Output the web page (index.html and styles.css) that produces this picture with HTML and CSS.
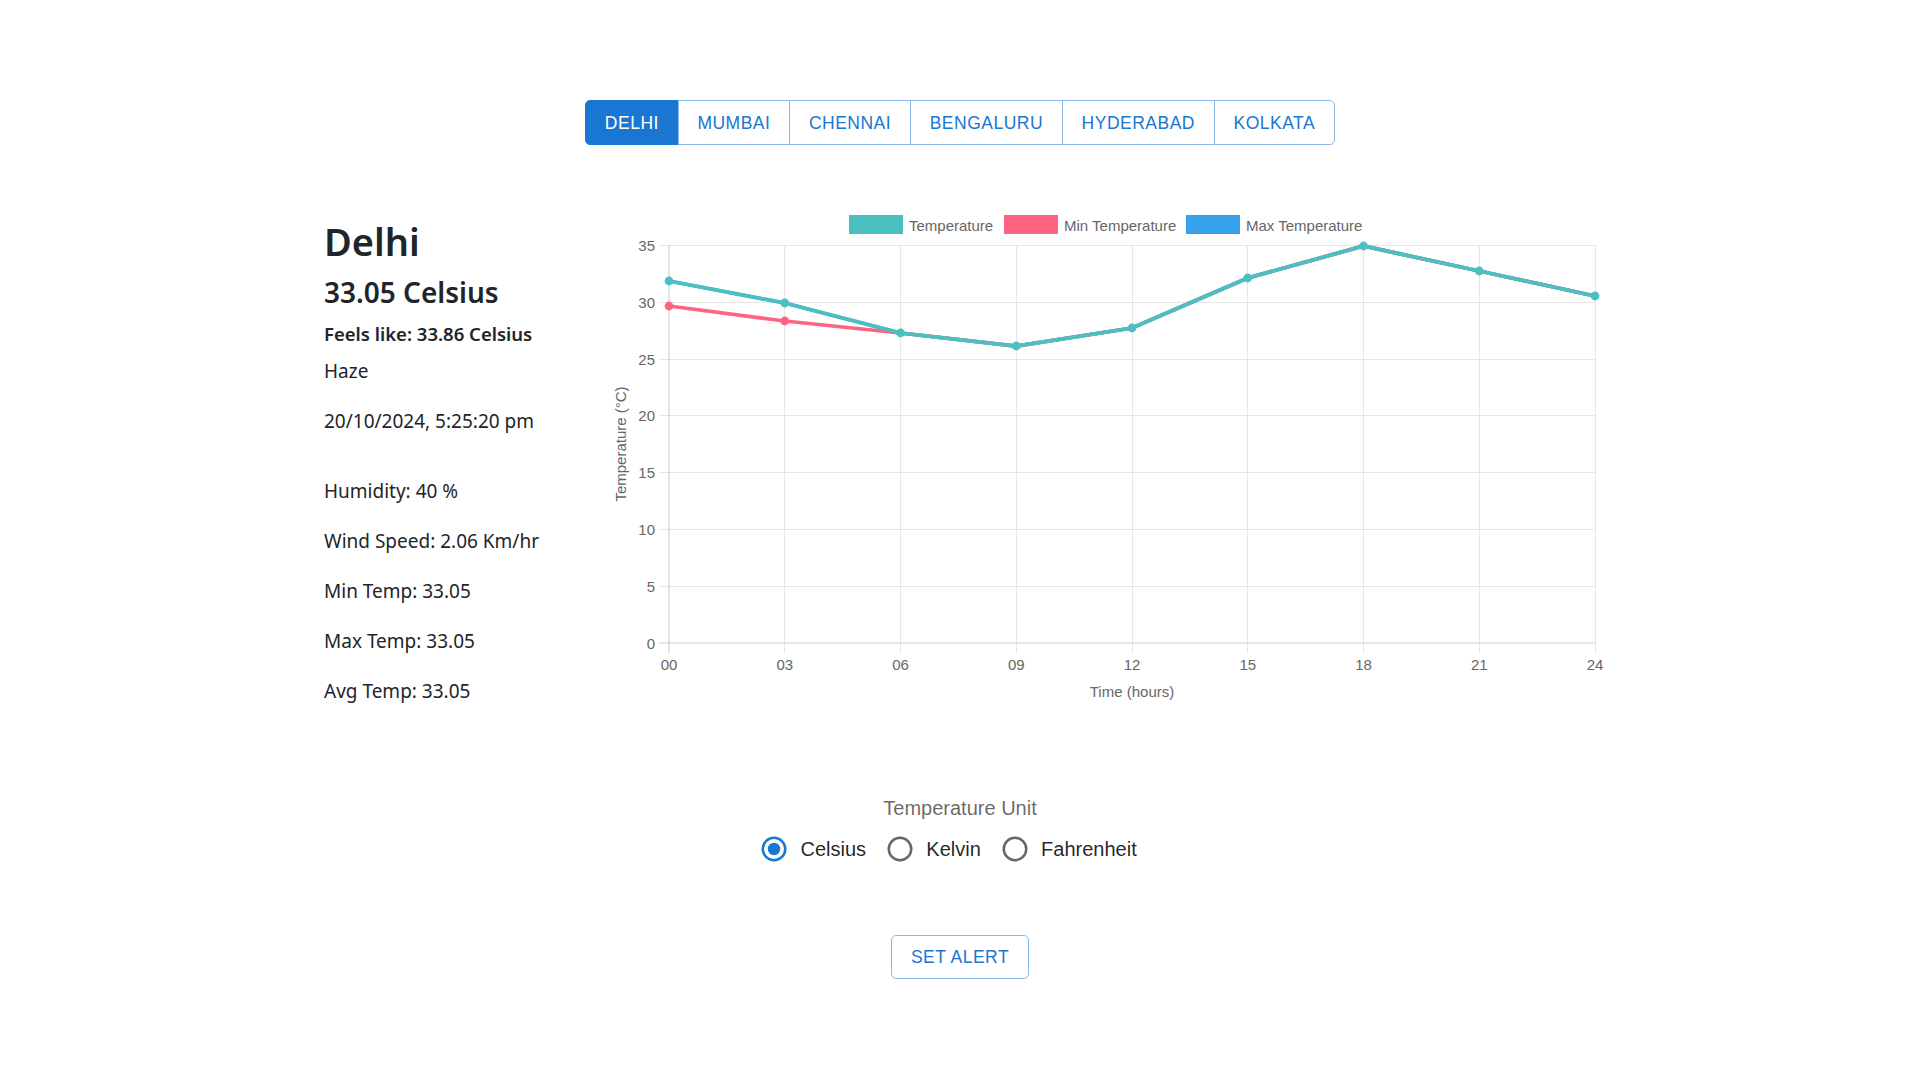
FILE: index.html
```html
<!DOCTYPE html>
<html lang="en">
<head>
<meta charset="utf-8">
<title>Weather Dashboard</title>
<link rel="stylesheet" href="styles.css">
</head>
<body>
<div class="tabs-bar">
  <div class="tab-group">
    <button class="tab active">Delhi</button>
    <button class="tab">Mumbai</button>
    <button class="tab">Chennai</button>
    <button class="tab">Bengaluru</button>
    <button class="tab">Hyderabad</button>
    <button class="tab">Kolkata</button>
  </div>
</div>

<div class="main">
  <div class="info">
    <h1 class="city">Delhi</h1>
    <h2 class="temp">33.05 Celsius</h2>
    <h5 class="feels">Feels like: 33.86 Celsius</h5>
    <p class="line">Haze</p>
    <p class="line date">20/10/2024, 5:25:20 pm</p>
    <p class="line stat">Humidity: 40 %</p>
    <p class="line stat">Wind Speed: 2.06 Km/hr</p>
    <p class="line stat">Min Temp: 33.05</p>
    <p class="line stat">Max Temp: 33.05</p>
    <p class="line stat">Avg Temp: 33.05</p>
  </div>

  <svg class="chart" width="1000" height="520" viewBox="0 0 1000 520">
    <!-- legend -->
    <rect x="249" y="15" width="54" height="19" fill="#4bc0c0"/>
    <text class="lg" x="309" y="25">Temperature</text>
    <rect x="404" y="15" width="54" height="19" fill="#ff6384"/>
    <text class="lg" x="464" y="25">Min Temperature</text>
    <rect x="586" y="15" width="54" height="19" fill="#36a2eb"/>
    <text class="lg" x="646" y="25">Max Temperature</text>

    <!-- horizontal grid -->
    <g stroke="#e6e6e6" stroke-width="1">
      <line x1="59" y1="45.5" x2="995" y2="45.5"/>
      <line x1="59" y1="102.5" x2="995" y2="102.5"/>
      <line x1="59" y1="159.5" x2="995" y2="159.5"/>
      <line x1="59" y1="215.5" x2="995" y2="215.5"/>
      <line x1="59" y1="272.5" x2="995" y2="272.5"/>
      <line x1="59" y1="329.5" x2="995" y2="329.5"/>
      <line x1="59" y1="386.5" x2="995" y2="386.5"/>
    </g>
    <!-- vertical grid -->
    <g stroke="#e6e6e6" stroke-width="1">
      <line x1="184.5" y1="45" x2="184.5" y2="453"/>
      <line x1="300.5" y1="45" x2="300.5" y2="453"/>
      <line x1="416.5" y1="45" x2="416.5" y2="453"/>
      <line x1="532.5" y1="45" x2="532.5" y2="453"/>
      <line x1="647.5" y1="45" x2="647.5" y2="453"/>
      <line x1="763.5" y1="45" x2="763.5" y2="453"/>
      <line x1="879.5" y1="45" x2="879.5" y2="453"/>
      <line x1="995.5" y1="45" x2="995.5" y2="453"/>
    </g>
    <!-- zero lines -->
    <g stroke="#cfcfcf" stroke-width="1.2">
      <line x1="59" y1="443" x2="995" y2="443"/>
      <line x1="69" y1="45" x2="69" y2="453"/>
    </g>

    <!-- y tick labels -->
    <g class="tk" text-anchor="end">
      <text x="55" y="46" dy="0.36em">35</text>
      <text x="55" y="103" dy="0.36em">30</text>
      <text x="55" y="160" dy="0.36em">25</text>
      <text x="55" y="216" dy="0.36em">20</text>
      <text x="55" y="273" dy="0.36em">15</text>
      <text x="55" y="330" dy="0.36em">10</text>
      <text x="55" y="387" dy="0.36em">5</text>
      <text x="55" y="443.5" dy="0.36em">0</text>
    </g>
    <!-- x tick labels -->
    <g class="tk" text-anchor="middle">
      <text x="69" y="470">00</text>
      <text x="184.75" y="470">03</text>
      <text x="300.5" y="470">06</text>
      <text x="416.25" y="470">09</text>
      <text x="532" y="470">12</text>
      <text x="647.75" y="470">15</text>
      <text x="763.5" y="470">18</text>
      <text x="879.25" y="470">21</text>
      <text x="995" y="470">24</text>
    </g>

    <!-- axis titles -->
    <text class="tk" x="21" y="244" dy="0.36em" text-anchor="middle" transform="rotate(-90 21 244)">Temperature (°C)</text>
    <text class="tk" x="532" y="492" dy="0.36em" text-anchor="middle">Time (hours)</text>

    <!-- max (hidden under temperature) -->
    <polyline fill="none" stroke="#36a2eb" stroke-width="3.75" points="69,81 184.75,103 300.5,133 416.25,146 532,128 647.75,78 763.5,46 879.25,71 995,96"/>
    <!-- min -->
    <polyline fill="none" stroke="#ff6384" stroke-width="3.75" points="69,106 184.75,121 300.5,133 416.25,146 532,128 647.75,78 763.5,46 879.25,71 995,96"/>
    <g fill="#ff6384">
      <circle cx="69" cy="106" r="4.4"/>
      <circle cx="184.75" cy="121" r="4.4"/>
    </g>
    <!-- temperature -->
    <polyline fill="none" stroke="#4bc0c0" stroke-width="3.75" points="69,81 184.75,103 300.5,133 416.25,146 532,128 647.75,78 763.5,46 879.25,71 995,96"/>
    <g fill="#4bc0c0">
      <circle cx="69" cy="81" r="4.4"/>
      <circle cx="184.75" cy="103" r="4.4"/>
      <circle cx="300.5" cy="133" r="4.4"/>
      <circle cx="416.25" cy="146" r="4.4"/>
      <circle cx="532" cy="128" r="4.4"/>
      <circle cx="647.75" cy="78" r="4.4"/>
      <circle cx="763.5" cy="46" r="4.4"/>
      <circle cx="879.25" cy="71" r="4.4"/>
      <circle cx="995" cy="96" r="4.4"/>
    </g>
  </svg>
</div>

<div class="units">
  <div class="unit-label">Temperature Unit</div>
  <div class="radio-row">
    <label class="radio-opt">
      <span class="radio-icon">
        <svg width="30" height="30" viewBox="0 0 24 24"><circle cx="12" cy="12" r="9" fill="none" stroke="#1976d2" stroke-width="2"/><circle cx="12" cy="12" r="5" fill="#1976d2"/></svg>
      </span>
      <span class="radio-text">Celsius</span>
    </label>
    <label class="radio-opt">
      <span class="radio-icon">
        <svg width="30" height="30" viewBox="0 0 24 24"><circle cx="12" cy="12" r="9" fill="none" stroke="#666666" stroke-width="2"/></svg>
      </span>
      <span class="radio-text">Kelvin</span>
    </label>
    <label class="radio-opt">
      <span class="radio-icon">
        <svg width="30" height="30" viewBox="0 0 24 24"><circle cx="12" cy="12" r="9" fill="none" stroke="#666666" stroke-width="2"/></svg>
      </span>
      <span class="radio-text">Fahrenheit</span>
    </label>
  </div>
</div>

<div class="alert-wrap">
  <button class="alert-btn">Set Alert</button>
</div>
</body>
</html>
```

FILE: styles.css
```css
* {
  box-sizing: border-box;
}

body {
  margin: 0;
  background: #ffffff;
  font-family: "Noto Sans", "Open Sans", sans-serif;
  color: #212529;
}

/* City tabs */
.tabs-bar {
  display: flex;
  justify-content: center;
  padding-top: 100px;
}

.tab-group {
  display: inline-flex;
}

.tab {
  font-family: "Liberation Sans", Arial, sans-serif;
  font-size: 17.5px;
  font-weight: 500;
  letter-spacing: 0.5px;
  text-transform: uppercase;
  color: #1976d2;
  background: #ffffff;
  border: 1px solid #8cbae8;
  height: 45px;
  line-height: 44px;
  padding: 0 18.75px;
  margin: 0;
  cursor: pointer;
}

.tab + .tab {
  margin-left: -1px;
}

.tab:first-child {
  border-radius: 5px 0 0 5px;
}

.tab:last-child {
  border-radius: 0 5px 5px 0;
}

.tab.active {
  background: #1976d2;
  border-color: #1976d2;
  color: #ffffff;
}

/* Main content */
.main {
  width: 1280px;
  margin: 55px auto 0;
  display: flex;
  align-items: flex-start;
}

.info {
  width: 280px;
  flex: none;
  padding-left: 4px;
  padding-top: 17px;
}

.city {
  margin: 0 0 9px;
  font-size: 38px;
  line-height: 48px;
  font-weight: 600;
}

.temp {
  margin: 0 0 13px;
  font-size: 28px;
  line-height: 36px;
  font-weight: 600;
}

.feels {
  margin: 0 0 10.5px;
  font-size: 18.5px;
  line-height: 22px;
  font-weight: 600;
}

.line {
  margin: 0 0 20px;
  font-size: 19px;
  line-height: 30px;
}

.date {
  margin-bottom: 40.5px;
}

.stat:last-child {
  margin-bottom: 0;
}

.chart {
  display: block;
  flex: none;
  overflow: visible;
}

.chart .lg,
.chart .tk {
  font-family: "Liberation Sans", Arial, sans-serif;
  font-size: 15px;
  fill: #666666;
}

.chart .lg {
  dominant-baseline: central;
}

/* Units */
.units {
  display: flex;
  flex-direction: column;
  align-items: center;
  margin-top: 74px;
}

.unit-label {
  font-family: "Liberation Sans", Arial, sans-serif;
  font-size: 20px;
  line-height: 28.75px;
  color: rgba(0, 0, 0, 0.6);
}

.radio-row {
  display: flex;
}

.radio-opt {
  display: inline-flex;
  align-items: center;
  margin-left: -13.75px;
  margin-right: 21.5px;
  font-family: "Liberation Sans", Arial, sans-serif;
  font-size: 20px;
  line-height: 30px;
  color: rgba(0, 0, 0, 0.87);
  cursor: pointer;
}

.radio-icon {
  display: flex;
  padding: 11.25px;
}

.radio-icon svg {
  display: block;
}

/* Alert button */
.alert-wrap {
  display: flex;
  justify-content: center;
  margin-top: 60px;
}

.alert-btn {
  font-family: "Liberation Sans", Arial, sans-serif;
  font-size: 17.5px;
  font-weight: 500;
  letter-spacing: 0.5px;
  text-transform: uppercase;
  color: #1976d2;
  background: #ffffff;
  border: 1px solid #8cbae8;
  border-radius: 5px;
  height: 44px;
  line-height: 42px;
  padding: 0 18.75px;
  cursor: pointer;
}
```
